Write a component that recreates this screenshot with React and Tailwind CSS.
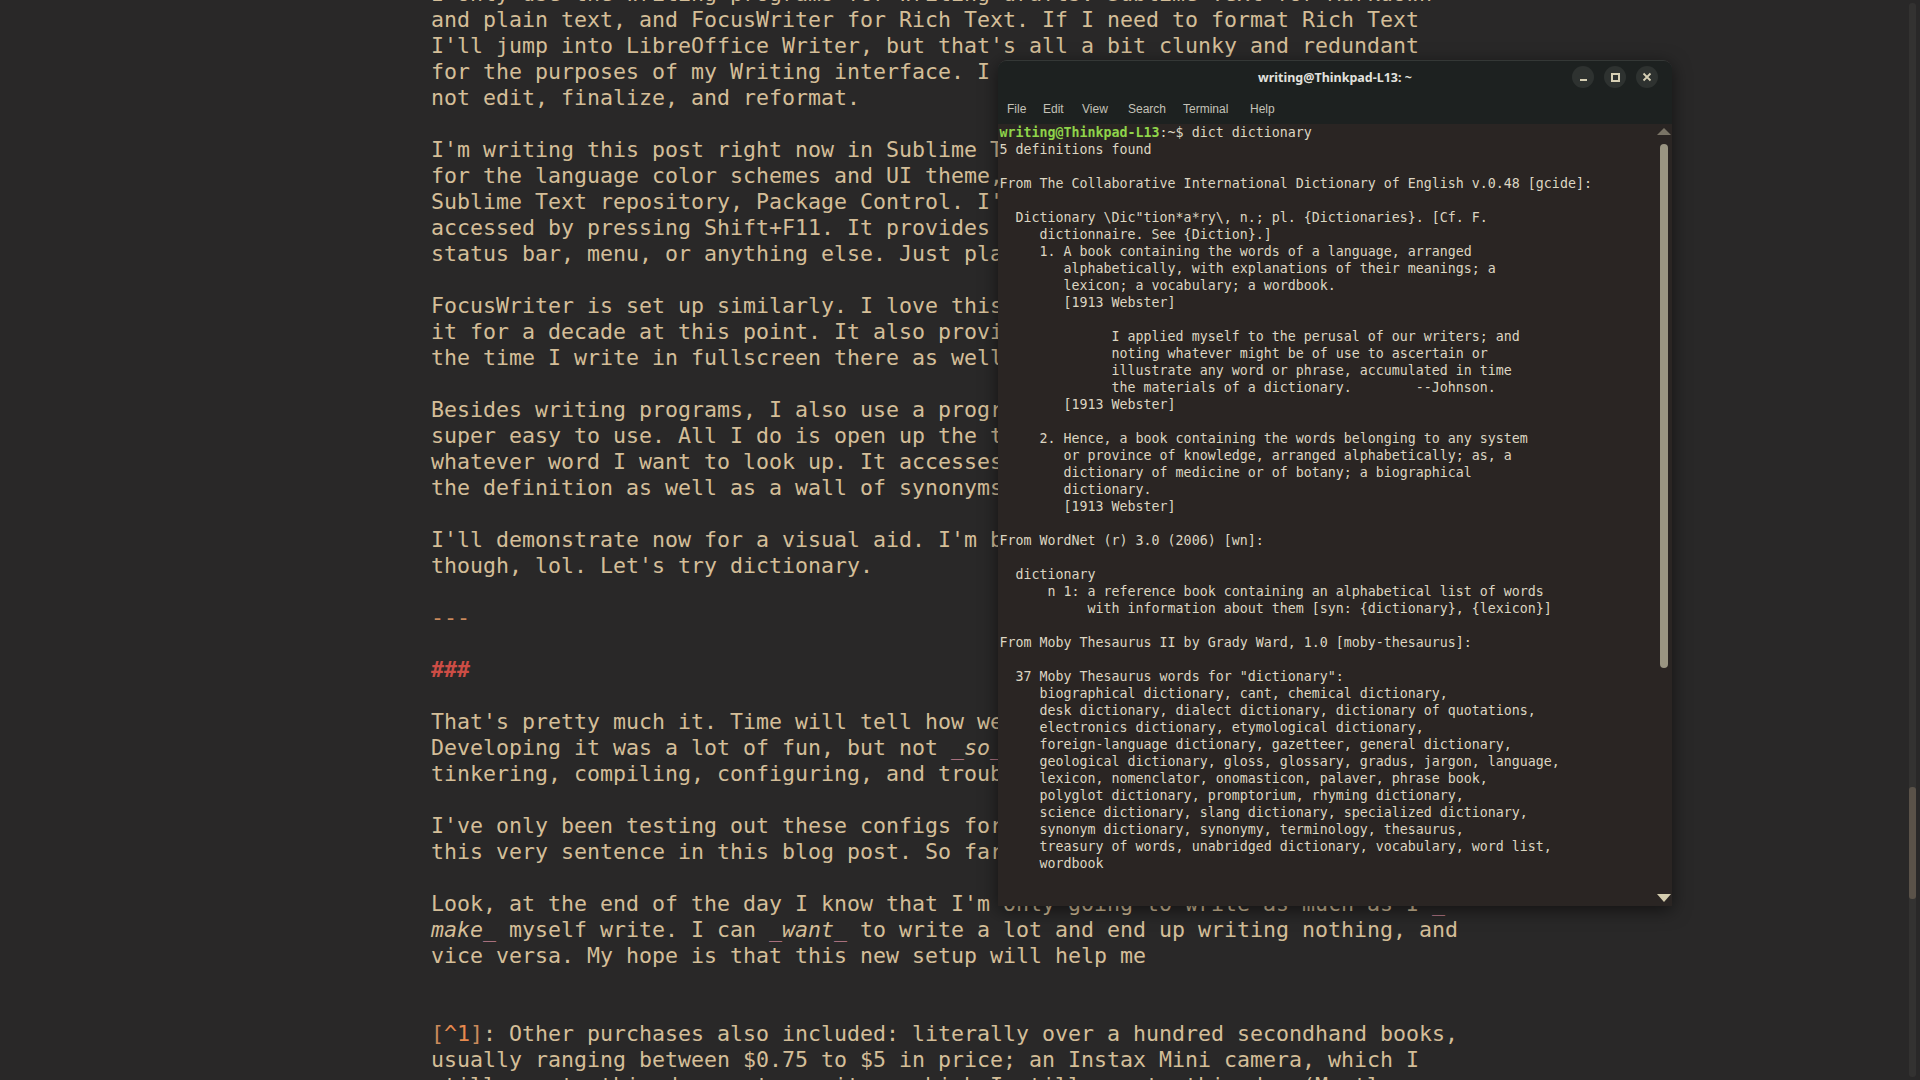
import React from 'react';

// gruvbox-ish markdown buffer shown in Sublime's distraction-free mode
const U = 'text-[#a8707e]';
const IT = 'italic';

const editorLines = [
  'I only use the writing programs for writing drafts: Sublime Text for Markdown',
  'and plain text, and FocusWriter for Rich Text. If I need to format Rich Text',
  "I'll jump into LibreOffice Writer, but that's all a bit clunky and redundant",
  'for the purposes of my Writing interface. I use these programs to write, and',
  'not edit, finalize, and reformat.',
  '',
  "I'm writing this post right now in Sublime Text, using Gruvbox Material",
  'for the language color schemes and UI theme, both installed through the',
  "Sublime Text repository, Package Control. I've set up a distraction-free mode",
  'accessed by pressing Shift+F11. It provides a fullscreen view without a',
  'status bar, menu, or anything else. Just plain text on a dark background.',
  '',
  "FocusWriter is set up similarly. I love this program; I've been using",
  'it for a decade at this point. It also provides a fullscreen mode, and most of',
  'the time I write in fullscreen there as well.',
  '',
  'Besides writing programs, I also use a program called dict, which is',
  'super easy to use. All I do is open up the terminal and type dict and',
  'whatever word I want to look up. It accesses several dictionaries and shows',
  'the definition as well as a wall of synonyms.',
  '',
  "I'll demonstrate now for a visual aid. I'm bad at coming up with examples",
  "though, lol. Let's try dictionary.",
  '',
  [['---', 'text-[#c98a5c]']],
  '',
  [['###', 'text-[#cc4d45] font-bold']],
  '',
  "That's pretty much it. Time will tell how well this setup works for me.",
  [
    ['Developing it was a lot of fun, but not '],
    ['_', U],
    ['so', IT],
    ['_', U],
    [' fun that I want to keep'],
  ],
  'tinkering, compiling, configuring, and troubleshooting forever.',
  '',
  "I've only been testing out these configs for a day or so, up until writing",
  'this very sentence in this blog post. So far, so good.',
  '',
  [
    ["Look, at the end of the day I know that I'm only going to write as much as I "],
    ['_', U],
  ],
  [
    ['make', IT],
    ['_', U],
    [' myself write. I can '],
    ['_', U],
    ['want', IT],
    ['_', U],
    [' to write a lot and end up writing nothing, and'],
  ],
  'vice versa. My hope is that this new setup will help me',
  '',
  '',
  [
    ['[', 'text-[#c98a5c]'],
    ['^1', 'text-[#e78a4e]'],
    [']', 'text-[#c98a5c]'],
    [': Other purchases also included: literally over a hundred secondhand books,'],
  ],
  'usually ranging between $0.75 to $5 in price; an Instax Mini camera, which I',
  'still use to this day; a typewriter, which I still use to this day (Mostly',
];

const termLines = [
  null,
  '5 definitions found',
  '',
  'From The Collaborative International Dictionary of English v.0.48 [gcide]:',
  '',
  '  Dictionary \\Dic"tion*a*ry\\, n.; pl. {Dictionaries}. [Cf. F.',
  '     dictionnaire. See {Diction}.]',
  '     1. A book containing the words of a language, arranged',
  '        alphabetically, with explanations of their meanings; a',
  '        lexicon; a vocabulary; a wordbook.',
  '        [1913 Webster]',
  '',
  '              I applied myself to the perusal of our writers; and',
  '              noting whatever might be of use to ascertain or',
  '              illustrate any word or phrase, accumulated in time',
  '              the materials of a dictionary.        --Johnson.',
  '        [1913 Webster]',
  '',
  '     2. Hence, a book containing the words belonging to any system',
  '        or province of knowledge, arranged alphabetically; as, a',
  '        dictionary of medicine or of botany; a biographical',
  '        dictionary.',
  '        [1913 Webster]',
  '',
  'From WordNet (r) 3.0 (2006) [wn]:',
  '',
  '  dictionary',
  '      n 1: a reference book containing an alphabetical list of words',
  '           with information about them [syn: {dictionary}, {lexicon}]',
  '',
  'From Moby Thesaurus II by Grady Ward, 1.0 [moby-thesaurus]:',
  '',
  '  37 Moby Thesaurus words for "dictionary":',
  '     biographical dictionary, cant, chemical dictionary,',
  '     desk dictionary, dialect dictionary, dictionary of quotations,',
  '     electronics dictionary, etymological dictionary,',
  '     foreign-language dictionary, gazetteer, general dictionary,',
  '     geological dictionary, gloss, glossary, gradus, jargon, language,',
  '     lexicon, nomenclator, onomasticon, palaver, phrase book,',
  '     polyglot dictionary, promptorium, rhyming dictionary,',
  '     science dictionary, slang dictionary, specialized dictionary,',
  '     synonym dictionary, synonymy, terminology, thesaurus,',
  '     treasury of words, unabridged dictionary, vocabulary, word list,',
  '     wordbook',
];

const menu = [
  ['File', 'w-[36px]'],
  ['Edit', 'w-[39px]'],
  ['View', 'w-[46px]'],
  ['Search', 'w-[55px]'],
  ['Terminal', 'w-[67px]'],
  ['Help', 'w-[40px]'],
];

function EditorLine({ line }) {
  if (typeof line === 'string') {
    return <div className="h-[26px] whitespace-pre">{line}</div>;
  }
  return (
    <div className="h-[26px] whitespace-pre">
      {line.map(([text, cls], i) => (
        <span key={i} className={cls}>
          {text}
        </span>
      ))}
    </div>
  );
}

function WinButton({ children }) {
  return (
    <div className="w-[22px] h-[22px] rounded-full bg-[#2e3230] flex items-center justify-center">
      {children}
    </div>
  );
}

function Terminal() {
  return (
    <div className="absolute left-[998px] top-[60px] w-[674px] h-[846px] flex flex-col rounded-t-[9px] overflow-hidden border-t border-[#343836] shadow-[0_4px_18px_rgba(0,0,0,0.55)]">
      <div className="bg-[#1d2120] h-[35px] relative flex items-center justify-center">
        <span className="text-[#e2e2de] text-[12.5px] font-bold" style={{ fontFamily: '"Noto Sans", sans-serif' }}>
          writing@Thinkpad-L13: ~
        </span>
        <div className="absolute right-[14px] top-[5px] flex gap-[10px]">
          <WinButton>
            <div className="w-[7px] h-[2px] bg-[#d6cfb4] mt-[6px]" />
          </WinButton>
          <WinButton>
            <div className="w-[9px] h-[9px] border-2 border-[#d6cfb4]" />
          </WinButton>
          <WinButton>
            <svg width="10" height="10" viewBox="0 0 10 10">
              <path d="M1.5 1.5 L8.5 8.5 M8.5 1.5 L1.5 8.5" stroke="#d6cfb4" strokeWidth="1.8" />
            </svg>
          </WinButton>
        </div>
      </div>
      <div
        className="bg-[#1d2120] h-[28px] flex items-center pl-[9px] pb-[2px] text-[12px] text-[#c4c2b8]"
        style={{ fontFamily: '"Liberation Sans", sans-serif' }}
      >
        {menu.map(([m, w]) => (
          <span key={m} className={w}>
            {m}
          </span>
        ))}
      </div>
      <div className="flex-1 bg-[#2a2523] flex">
        <div
          className="flex-1 pl-[1.5px] text-[13.3px] leading-[17px] text-[#ddd6c2]"
          style={{ fontFamily: '"DejaVu Sans Mono", monospace' }}
        >
          {termLines.map((l, i) =>
            l === null ? (
              <div key={i} className="h-[17px] whitespace-pre">
                <span className="text-[#8fd44a] font-bold">writing@Thinkpad-L13</span>:~$ dict dictionary
              </div>
            ) : (
              <div key={i} className="h-[17px] whitespace-pre">
                {l}
              </div>
            )
          )}
        </div>
        <div className="w-[16px] flex flex-col items-center py-[4px]">
          <svg width="14" height="7" viewBox="0 0 14 7">
            <path d="M0 7 L7 0 L14 7 Z" fill="#7a7466" />
          </svg>
          <div className="w-[8px] h-[524px] mt-[9px] rounded-[4px] bg-[#9a9582]" />
          <div className="flex-1" />
          <svg width="14" height="8" viewBox="0 0 14 8">
            <path d="M0 0 L14 0 L7 8 Z" fill="#d4ccae" />
          </svg>
        </div>
      </div>
    </div>
  );
}

export default function App() {
  return (
    <div className="relative w-[1920px] h-[1080px] overflow-hidden bg-[#292828] flex">
      <div className="flex-1 pl-[431px] overflow-hidden">
        <div
          className="-mt-[19px] text-[21.6px] leading-[26px] text-[#d4be98]"
          style={{ fontFamily: '"DejaVu Sans Mono", monospace' }}
        >
          {editorLines.map((line, i) => (
            <EditorLine key={i} line={line} />
          ))}
        </div>
      </div>
      <div className="pr-[4px] py-[3px] flex">
        <div className="w-[7px] h-full rounded-[3px] bg-[#333231] flex flex-col">
          <div className="mt-[784px] h-[112px] rounded-[3px] bg-[#5a5249]" />
        </div>
      </div>

      <Terminal />
    </div>
  );
}
